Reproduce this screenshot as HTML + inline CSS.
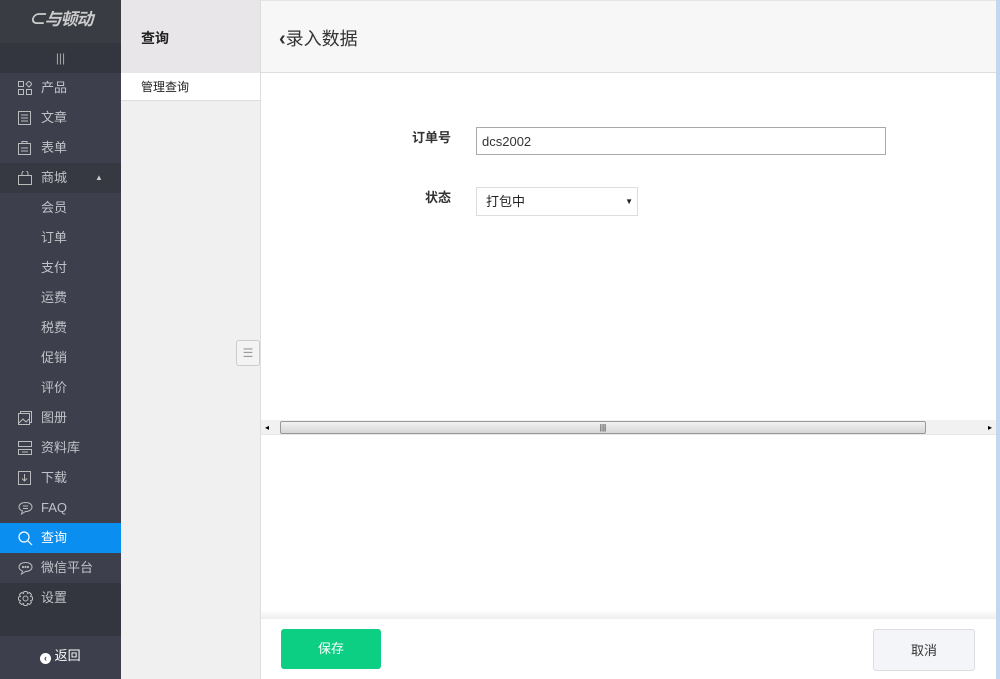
<!DOCTYPE html>
<html><head><meta charset="utf-8"><style>
*{margin:0;padding:0;box-sizing:border-box}
body{width:1000px;height:679px;overflow:hidden;font-family:"Liberation Sans","Noto Sans CJK SC",sans-serif;font-size:13px;position:relative;background:#fff}
.sb{position:absolute;left:0;top:0;width:121px;height:679px;background:#3d404c}
.logo{height:43px;background:#393c43;color:#ccc;font-style:italic;font-weight:bold;font-size:17px;text-align:center;line-height:40px;letter-spacing:-1px}
.ham{height:30px;background:#33363e;color:#aaa;text-align:center;line-height:30px;font-size:12px}
.it{height:30px;line-height:30px;color:#c0c2c8;padding-left:41px;position:relative}
.it svg{position:absolute;left:18px;top:8px}
.act{background:#0a8ef0;color:#fff}
.dark{background:#363942}
.c2{position:absolute;left:121px;top:0;width:140px;height:679px;background:#f0f0f0;border-right:1px solid #ddd}
.main{position:absolute;left:261px;top:0;width:735px;height:679px}
</style></head><body>
<div class="sb">
<div class="logo">⊂与顿动</div>
<div class="ham">|||</div>
<div class="it"><svg width="14" height="14" fill="none" stroke="#bbb"><rect x=".5" y=".5" width="5" height="5"/><rect x=".5" y="8.5" width="5" height="5"/><rect x="8.5" y="8.5" width="5" height="5"/><path d="M11 0l3 3-3 3-3-3z"/></svg>产品</div>
<div class="it"><svg width="14" height="14" fill="none" stroke="#bbb"><rect x=".5" y=".5" width="12" height="13"/><path d="M3 4h7M3 7h7M3 10h7"/></svg>文章</div>
<div class="it"><svg width="14" height="14" fill="none" stroke="#bbb"><rect x=".5" y="2.5" width="12" height="11"/><path d="M4 2.5v-2h5v2M3 7h7M3 10h7"/></svg>表单</div>
<div class="it dark"><svg width="15" height="14" fill="none" stroke="#bbb"><rect x=".5" y="4.5" width="13" height="9"/><path d="M4 4.5v-2a3 3 0 0 1 6 0v2"/></svg>商城<span style="position:absolute;left:95px;top:0;font-size:8px;color:#ccc">▲</span></div>
<div class="it">会员</div><div class="it">订单</div><div class="it">支付</div><div class="it">运费</div><div class="it">税费</div><div class="it">促销</div><div class="it">评价</div>
<div class="it"><svg width="14" height="14" fill="none" stroke="#bbb"><rect x=".5" y="2.5" width="11" height="11"/><path d="M2.5 2.5v-2h11v11h-2M1 12l4-4 3 3 3-3"/></svg>图册</div>
<div class="it"><svg width="14" height="14" fill="none" stroke="#bbb"><rect x=".5" y=".5" width="13" height="5"/><rect x=".5" y="8.5" width="13" height="5"/><path d="M4 11h6"/></svg>资料库</div>
<div class="it"><svg width="14" height="14" fill="none" stroke="#bbb"><rect x=".5" y=".5" width="12" height="13"/><path d="M6.5 3v7M4 7.5l2.5 2.5 2.5-2.5"/></svg>下载</div>
<div class="it"><svg width="15" height="14" fill="none" stroke="#bbb"><path d="M7.5 1.5c4 0 6.5 2 6.5 4.5s-2.5 4.5-6.5 4.5l-4 2.5 1-3C2 9 1 7.5 1 6c0-2.5 2.5-4.5 6.5-4.5zM5 5h5M5 7.5h5"/></svg>FAQ</div>
<div class="it act"><svg width="15" height="15" fill="none" stroke="#fff" stroke-width="1.2"><circle cx="6" cy="6" r="5"/><path d="M10 10l4 4"/></svg>查询</div>
<div class="it"><svg width="15" height="14" fill="none" stroke="#bbb"><path d="M7.5 1.5c4 0 6.5 2 6.5 4.5s-2.5 4.5-6.5 4.5l-4 2.5 1-3C2 9 1 7.5 1 6c0-2.5 2.5-4.5 6.5-4.5z"/><circle cx="5" cy="6" r=".6"/><circle cx="7.5" cy="6" r=".6"/><circle cx="10" cy="6" r=".6"/></svg>微信平台</div>
<div style="background:#33363f;height:53px"><div class="it"><svg width="15" height="15" fill="none" stroke="#bbb"><circle cx="7.5" cy="7.5" r="2.5"/><path d="M6 .5h3l.5 2 2-1 2 2-1 2 2 .5v3l-2 .5 1 2-2 2-2-1-.5 2H6l-.5-2-2 1-2-2 1-2-2-.5V6l2-.5-1-2 2-2 2 1z"/></svg>设置</div></div>
<div style="height:43px;line-height:40px;color:#fff;padding-left:40px"><span style="display:inline-block;width:11px;height:11px;border-radius:50%;background:#fff;color:#3d404c;font-size:9px;line-height:11px;text-align:center;vertical-align:-1px;font-weight:bold">‹</span> 返回</div>
</div>
<div class="c2">
<div style="height:73px;background:#e8e6e8;font-weight:bold;font-size:14px;line-height:76px;padding-left:20px;color:#222">查询</div>
<div style="height:28px;background:#fff;line-height:28px;padding-left:20px;color:#222;font-size:12px;border-bottom:1px solid #ddd">管理查询</div>
<div style="position:absolute;left:115px;top:340px;width:24px;height:26px;border:1px solid #ccc;border-radius:3px;background:#f3f3f3;color:#999;font-size:12px;text-align:center;line-height:24px">☰</div>
</div>
<div class="main">
<div style="height:73px;background:#f7f7f7;border-bottom:1px solid #ddd;border-top:1px solid #e4e4e4;font-size:18px;line-height:76px;padding-left:18px;color:#333"><b style="font-size:20px">‹</b>录入数据</div>
<div style="position:absolute;left:0;top:127px;width:190px;text-align:right;font-weight:bold;color:#333">订单号</div>
<input value="dcs2002" style="position:absolute;left:215px;top:127px;width:410px;height:28px;border:1px solid #aaa;padding-left:5px;font-family:inherit;font-size:13px;color:#333">
<div style="position:absolute;left:0;top:187px;width:190px;text-align:right;font-weight:bold;color:#333">状态</div>
<div style="position:absolute;left:215px;top:187px;width:162px;height:29px;border:1px solid #ddd;line-height:28px;padding-left:9px;color:#222">打包中<span style="position:absolute;right:4px;font-size:8px">▼</span></div>
<div style="position:absolute;left:0;top:420px;width:735px;height:15px;background:#f1f1f1;border-bottom:1px solid #e6e6e6">
<span style="position:absolute;left:4px;top:0;font-size:8px;line-height:15px">◂</span>
<div style="position:absolute;left:19px;top:1px;width:646px;height:13px;border:1px solid #999;border-radius:2px;background:linear-gradient(#f2f2f2,#d6d6d6);font-size:8px;text-align:center;line-height:11px">|||</div>
<span style="position:absolute;right:4px;top:0;font-size:8px;line-height:15px">▸</span></div>
<div style="position:absolute;left:0;top:610px;width:735px;height:9px;background:linear-gradient(#fff,#eee)"></div>
<div style="position:absolute;left:20px;top:629px;width:100px;height:40px;background:#0ccf83;border-radius:3px;color:#fff;text-align:center;line-height:40px">保存</div>
<div style="position:absolute;left:612px;top:629px;width:102px;height:42px;background:#f4f5f8;border:1px solid #ddd;border-radius:3px;color:#333;text-align:center;line-height:42px">取消</div>
</div>
<div style="position:absolute;left:996px;top:0;width:4px;height:679px;background:#c3d8ee"></div>
</body></html>
